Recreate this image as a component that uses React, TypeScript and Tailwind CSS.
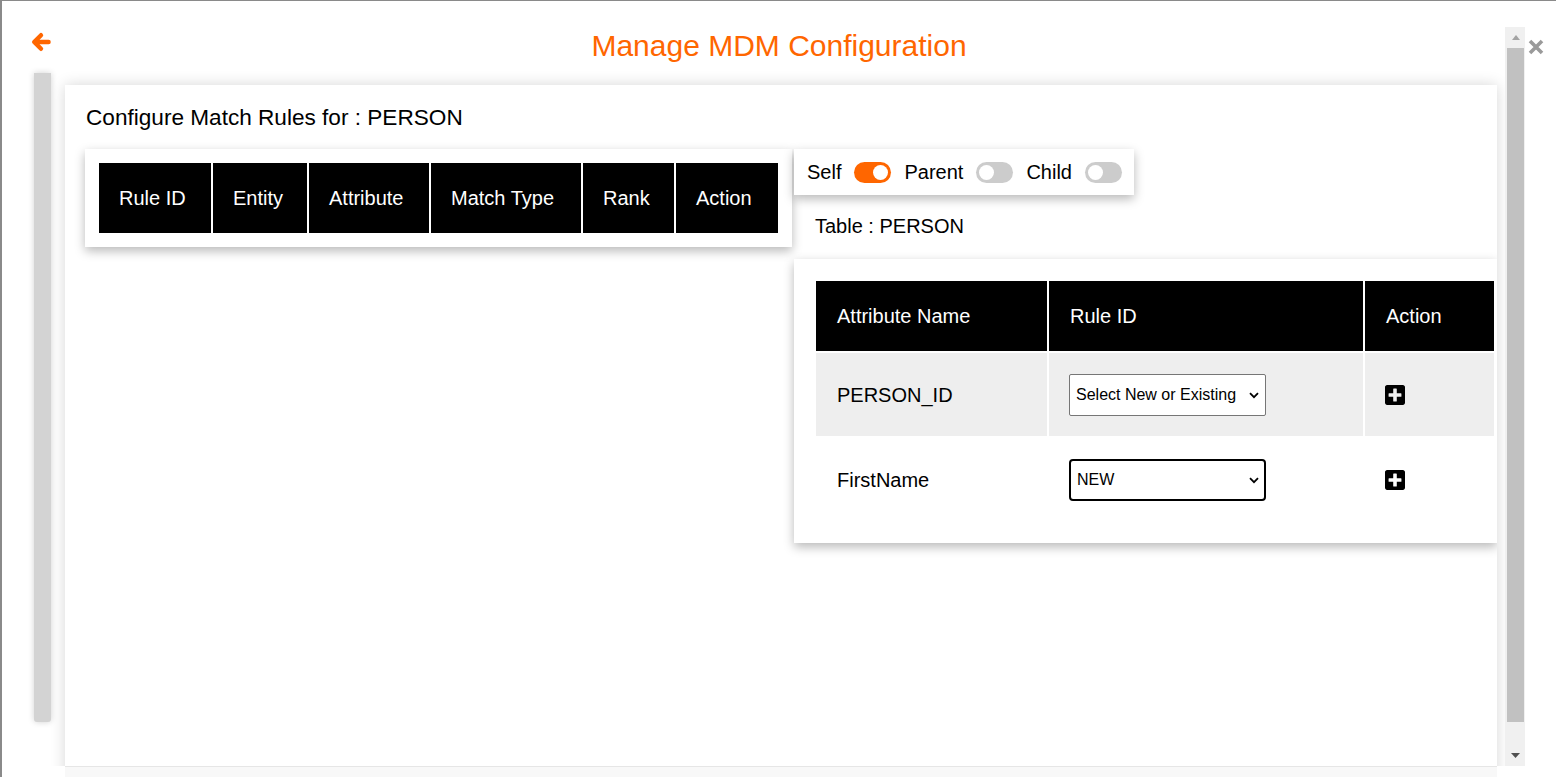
import React, { useState } from 'react';

const ORANGE = '#ff6600';

const ArrowLeft = () => (
  <svg width="20" height="20" viewBox="0 0 20 20" fill="none" stroke={ORANGE} strokeWidth="4.4" strokeLinecap="round" strokeLinejoin="round">
    <path d="M10 3.2L3.2 10L10 16.8M3.4 10H17.6" />
  </svg>
);

const PlusSquare = () => (
  <svg width="20" height="20" viewBox="0 32 448 448" fill="#000">
    <path d="M400 32H48C21.5 32 0 53.5 0 80v352c0 26.5 21.5 48 48 48h352c26.5 0 48-21.5 48-48V80c0-26.5-21.5-48-48-48zm-32 252c0 6.6-5.4 12-12 12h-92v92c0 6.6-5.4 12-12 12h-56c-6.6 0-12-5.4-12-12v-92H92c-6.6 0-12-5.4-12-12v-56c0-6.6 5.4-12 12-12h92v-92c0-6.6 5.4-12 12-12h56c6.6 0 12 5.4 12 12v92h92c6.6 0 12 5.4 12 12v56z" />
  </svg>
);

const Toggle = ({ on, onClick }: { on: boolean; onClick: () => void }) => (
  <button
    onClick={onClick}
    className={`flex h-[21px] w-[37px] items-center rounded-full px-[3px] ${on ? 'justify-end bg-[#ff6600]' : 'justify-start bg-[#cccccc]'}`}
  >
    <span className="block h-[15px] w-[15px] rounded-full bg-white" />
  </button>
);

const RuleSelect = ({ value, options, focused }: { value: string; options: string[]; focused?: boolean }) => (
  <div className="relative w-[197px]">
    <select
      defaultValue={value}
      className={`h-[42px] w-full appearance-none bg-white pl-[6px] text-[16px] text-black outline-none ${focused ? 'rounded-[4px] border-2 border-black' : 'rounded-[2px] border border-[#767676]'}`}
    >
      {options.map((o) => (
        <option key={o}>{o}</option>
      ))}
    </select>
    <svg className="pointer-events-none absolute right-[7px] top-[18px]" width="10" height="7" viewBox="0 0 10 7">
      <path d="M1 1.2l4 4 4-4" fill="none" stroke="#000" strokeWidth="1.8" />
    </svg>
  </div>
);

const leftCols = [
  { label: 'Rule ID', w: 'w-[112px]' },
  { label: 'Entity', w: 'w-[94px]' },
  { label: 'Attribute', w: 'w-[120px]' },
  { label: 'Match Type', w: 'w-[150px]' },
  { label: 'Rank', w: 'w-[91px]' },
  { label: 'Action', w: 'w-[102px]' },
];

const attributes = [
  { name: 'PERSON_ID', value: 'Select New or Existing', focused: false },
  { name: 'FirstName', value: 'NEW', focused: true },
];

export default function App() {
  const [scope, setScope] = useState({ self: true, parent: false, child: false });

  return (
    <div
      className="flex h-[777px] w-[1556px] flex-col overflow-hidden border-l-2 border-t border-[#8a8a8a] bg-white text-black"
      style={{ fontFamily: '"Liberation Sans", Arial, sans-serif' }}
    >
      <div className="h-[26px] shrink-0" />
      <div className="flex h-[739px] shrink-0">
        <div className="w-[25px] shrink-0" />
        {/* modal body */}
        <div className="flex w-[1478px] shrink-0 flex-col overflow-hidden">
          <div className="grid h-[46px] shrink-0 grid-cols-[1fr_auto_1fr]">
            <button className="self-start pl-[4px] pt-[5px]">
              <ArrowLeft />
            </button>
            <h1 className="pl-[26px] pt-[2px] text-[30px] leading-[34px] text-[#ff6600]">Manage MDM Configuration</h1>
            <div />
          </div>
          <div className="flex min-h-0 flex-1">
            <div className="w-[38px] shrink-0 pl-[7px]">
              <div className="h-[649px] w-[17px] rounded-b-[3px] bg-[#d3d3d3] shadow-[0_0_6px_rgba(0,0,0,0.18)]" />
            </div>
            <div className="mt-[12px] h-[700px] w-[1432px] shrink-0 overflow-hidden bg-white pl-[20px] shadow-[0_0_14px_rgba(0,0,0,0.16)]">
              <div className="pl-[1px] pt-[20px] text-[22.6px] leading-[25px]">Configure Match Rules for : PERSON</div>
              <div className="mt-[19px] flex items-start gap-[2px]">
                {/* rules table */}
                <div className="w-[707px] shrink-0 bg-white p-[14px] shadow-[0_4px_10px_rgba(0,0,0,0.28)]">
                  <div className="flex gap-[2px]">
                    {leftCols.map((c) => (
                      <div key={c.label} className={`${c.w} flex h-[70px] items-center bg-black pl-[20px] text-[20px] text-white`}>
                        {c.label}
                      </div>
                    ))}
                  </div>
                </div>

                <div className="min-w-0 flex-1">
                  <div className="flex h-[46px] w-fit items-center gap-[13px] bg-white pl-[13px] pr-[12px] text-[20px] shadow-[0_4px_10px_rgba(0,0,0,0.28)]">
                    <span>Self</span>
                    <Toggle on={scope.self} onClick={() => setScope({ ...scope, self: !scope.self })} />
                    <span>Parent</span>
                    <Toggle on={scope.parent} onClick={() => setScope({ ...scope, parent: !scope.parent })} />
                    <span>Child</span>
                    <Toggle on={scope.child} onClick={() => setScope({ ...scope, child: !scope.child })} />
                  </div>
                  <div className="pl-[21px] pt-[20px] text-[20px] leading-[23px]">Table : PERSON</div>

                  <div className="mt-[21px] bg-white pb-[22px] pl-[22px] pr-[3px] pt-[22px] shadow-[0_4px_10px_rgba(0,0,0,0.28)]">
                    <div className="grid grid-cols-[231px_314px_129px] gap-[2px] text-[20px]">
                      <div className="flex h-[70px] items-center bg-black pl-[21px] text-white">Attribute Name</div>
                      <div className="flex h-[70px] items-center bg-black pl-[21px] text-white">Rule ID</div>
                      <div className="flex h-[70px] items-center bg-black pl-[21px] text-white">Action</div>
                      {attributes.map((a, i) => {
                        const bg = i % 2 === 0 ? 'bg-[#eeeeee]' : 'bg-white';
                        return (
                          <React.Fragment key={a.name}>
                            <div className={`flex h-[83px] items-center pl-[21px] ${bg}`}>{a.name}</div>
                            <div className={`flex h-[83px] items-center pl-[20px] ${bg}`}>
                              <RuleSelect
                                value={a.value}
                                options={a.focused ? ['NEW', 'Select New or Existing'] : ['Select New or Existing', 'NEW']}
                                focused={a.focused}
                              />
                            </div>
                            <div className={`flex h-[83px] items-center pl-[20px] ${bg}`}>
                              <button>
                                <PlusSquare />
                              </button>
                            </div>
                          </React.Fragment>
                        );
                      })}
                    </div>
                  </div>
                </div>
              </div>
            </div>
          </div>
        </div>

        {/* scrollbar */}
        <div className="flex w-[20px] shrink-0 flex-col bg-[#f0f0f0]">
          <div className="flex h-[21px] items-center justify-center pl-[1px]">
            <svg width="8" height="5" viewBox="0 0 8 5">
              <path d="M0 5L4 0l4 5z" fill="#a3a3a3" />
            </svg>
          </div>
          <div className="ml-[2px] h-[674px] w-[17px] bg-[#c1c1c1]" />
          <div className="flex flex-1 items-end justify-center pb-[8px] pl-[1px]">
            <svg width="9" height="5" viewBox="0 0 9 5">
              <path d="M0 0h9L4.5 5z" fill="#505050" />
            </svg>
          </div>
        </div>

        {/* close */}
        <div className="flex-1 pl-[3px] pt-[11px]">
          <button>
            <svg width="16" height="16" viewBox="0 0 16 16">
              <path d="M2 2l12 12M14 2L2 14" stroke="#9a9a9a" strokeWidth="3.6" />
            </svg>
          </button>
        </div>
      </div>
      <div className="flex flex-1">
        <div className="w-[63px] shrink-0" />
        <div className="w-[1432px] border-t border-[#e6e6e6] bg-[#f8f8f8]" />
      </div>
    </div>
  );
}
